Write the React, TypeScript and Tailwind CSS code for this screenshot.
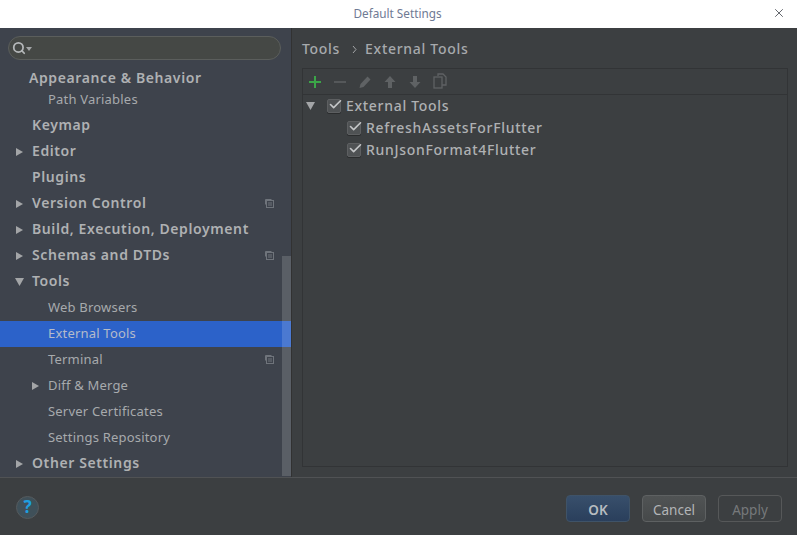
import { Check, Search, X } from 'lucide-react';

type Row = {
  label: string;
  arrow?: 'right' | 'down';
  child?: boolean;
  copy?: boolean;
  selected?: boolean;
};

const rows: Row[] = [
  { label: 'Keymap' },
  { label: 'Editor', arrow: 'right' },
  { label: 'Plugins' },
  { label: 'Version Control', arrow: 'right', copy: true },
  { label: 'Build, Execution, Deployment', arrow: 'right' },
  { label: 'Schemas and DTDs', arrow: 'right', copy: true },
  { label: 'Tools', arrow: 'down' },
  { label: 'Web Browsers', child: true },
  { label: 'External Tools', child: true, selected: true },
  { label: 'Terminal', child: true, copy: true },
  { label: 'Diff & Merge', child: true, arrow: 'right' },
  { label: 'Server Certificates', child: true },
  { label: 'Settings Repository', child: true },
  { label: 'Other Settings', arrow: 'right' },
];

function Arrow({ dir }: { dir: 'right' | 'down' }) {
  return (
    <svg width="9" height="10" viewBox="0 0 9 10" className="shrink-0">
      {dir === 'right' ? <path d="M1 1l7 4-7 4z" fill="#a3a5a7" /> : <path d="M0 1h9L4.500 9z" fill="#a3a5a7" />}
    </svg>
  );
}

function CopyMark() {
  return (
    <svg width="10" height="10" viewBox="0 0 10 10" fill="none" stroke="#6f747b" className="-mt-[2px] shrink-0">
      <path d="M7.500 1.500h-6v5" />
      <rect x="2.500" y="2.500" width="7" height="7" fill="#3e434c" />
      <path d="M4 5h4M4 7h4" />
    </svg>
  );
}

function Checked({ className }: { className?: string }) {
  return (
    <span className={`relative h-[14px] w-[14px] shrink-0 rounded-[2px] border border-[#5d5f61] bg-[#4f5254] shadow-[0_1px_0_#2b2d2e] ${className ?? ''}`}>
      <Check size={15} strokeWidth={2.6} className="absolute -top-[3px] left-0 text-[#c4c6c8]" />
    </span>
  );
}

function TreeRow({ row }: { row: Row }) {
  const weight = row.child ? 'text-[13px] font-normal tracking-[0.2px] text-[#a7aaad]' : 'pb-[4px] text-[14px] font-semibold tracking-[0.6px] text-[#afb1b3]';
  return (
    <div className={`flex h-[26px] items-center pr-[17px] ${row.selected ? 'bg-[#2c62c9]' : ''}`}>
      <div className={`flex items-center ${row.child ? 'w-[48px] pl-[31px]' : 'w-[32px] pl-[15px]'}`}>
        {row.arrow && <Arrow dir={row.arrow} />}
      </div>
      <span className={`flex-1 ${weight} ${row.selected ? 'text-[#b4bbc9]' : ''}`}>{row.label}</span>
      {row.copy && <CopyMark />}
    </div>
  );
}

function Sidebar() {
  return (
    <aside className="relative flex w-[291px] shrink-0 flex-col bg-[#3e434c]">
      <div className="ml-2 mr-[10px] mt-2 flex h-6 items-center rounded-full border border-[#5b5e5c] bg-[#454845] pl-[3px]">
        <Search size={14} strokeWidth={3} className="text-[#b5b8ba]" />
        <svg width="6" height="4" viewBox="0 0 6 4" className="mt-0.5">
          <path d="M0 0h6L3 4z" fill="#a3a5a7" />
        </svg>
      </div>
      <div className="mt-[5px] h-[26px] pl-[29px] text-[14px] font-semibold leading-[26px] tracking-[0.6px] text-[#afb1b3]">Appearance &amp; Behavior</div>
      <div className="h-[22px] pl-[48px] text-[13px] leading-[16px] tracking-[0.2px] text-[#a7aaad]">Path Variables</div>
      {rows.map((row) => (
        <TreeRow key={row.label} row={row} />
      ))}
      <div className="absolute bottom-[1px] right-0 top-[228px] w-[9px] bg-[#ffffff]/15" />
    </aside>
  );
}

function ToolTree() {
  return (
    <div className="flex flex-col text-[14px] tracking-[0.7px] text-[#afb1b3]">
      <div className="flex h-[22px] items-center pb-[1px] pl-[3px]">
        <Arrow dir="down" />
        <Checked className="ml-[12px]" />
        <span className="ml-[5px] pb-[1px] font-medium">External Tools</span>
      </div>
      {['RefreshAssetsForFlutter', 'RunJsonFormat4Flutter'].map((name) => (
        <div key={name} className="flex h-[22px] items-center pl-[44px]">
          <Checked />
          <span className="ml-[5px] pb-[1px] font-medium">{name}</span>
        </div>
      ))}
    </div>
  );
}

function Toolbar() {
  const off = '#5f6264';
  return (
    <div className="flex h-[26px] shrink-0 items-center gap-[9px] border-b border-[#323436] pl-[4px]">
      <svg width="16" height="16" viewBox="0 0 16 16" fill="#3ba548">
        <path d="M7 2h2v5h5v2H9v5H7V9H2V7h5z" />
      </svg>
      <svg width="16" height="16" viewBox="0 0 16 16" fill="#55585a">
        <path d="M2 7h12v2H2z" />
      </svg>
      <svg width="16" height="16" viewBox="0 0 16 16" fill={off}>
        <path d="M10.500 2.500l3 3-7 7.500-4 1 1-4z" />
      </svg>
      <svg width="16" height="16" viewBox="0 0 16 16" fill={off}>
        <path d="M8 2l5.500 6H10v6H6V8H2.500z" />
      </svg>
      <svg width="16" height="16" viewBox="0 0 16 16" fill={off}>
        <path d="M8 14l5.500-6H10V2H6v6H2.500z" />
      </svg>
      <svg width="16" height="16" viewBox="0 0 16 16" fill="none" stroke={off} strokeWidth="1.300" className="-mt-[1px]">
        <path d="M6 3V1h5l3 3v8h-4" />
        <rect x="2" y="4" width="8" height="11" />
      </svg>
    </div>
  );
}

function Content() {
  return (
    <main className="flex flex-1 flex-col border-l border-[#323232] pb-[10px] pl-[10px] pr-[9px]">
      <div className="flex h-[40px] items-center text-[14px] font-medium tracking-[0.7px] text-[#a7aaad]">
        <span>Tools</span>
        <svg width="5" height="9" viewBox="0 0 5 9" fill="none" stroke="#a3a5a7" className="ml-[12px] mr-[8px] mt-[2px]">
          <path d="M1 1l3 3.500-3 3.500" />
        </svg>
        <span>External Tools</span>
      </div>
      <div className="flex flex-1 flex-col border border-[#323436]">
        <Toolbar />
        <ToolTree />
      </div>
    </main>
  );
}

function Footer() {
  const base = 'flex h-[27px] w-16 items-center justify-center rounded-[4px] border pt-[4px] text-[13.5px]';
  return (
    <footer className="flex h-[58px] shrink-0 items-center border-t border-[#505254] bg-[#3c3f41] pl-4 pr-[15px] pt-[3px]">
      <div className="mb-[2px] flex h-[23px] w-[23px] items-center justify-center rounded-full border border-[#555a5d] bg-[#3f5059] text-[17px] font-bold text-[#1e9fe0]">?</div>
      <div className="ml-auto flex gap-3">
        <button className={`${base} border-[#3f5368] bg-gradient-to-b from-[#384f6b] to-[#2a3f5c] font-semibold text-[#b7bcc0]`}>OK</button>
        <button className={`${base} border-[#5e6162] bg-gradient-to-b from-[#505354] to-[#46494a] text-[#b3b5b7]`}>Cancel</button>
        <button className={`${base} border-[#565859] text-[#76797b]`}>Apply</button>
      </div>
    </footer>
  );
}

export default function App() {
  return (
    <div className="flex h-[535px] w-[797px] flex-col overflow-hidden bg-[#3c3f41] font-['Noto_Sans',sans-serif]">
      <header className="relative flex h-[28px] shrink-0 items-center justify-center bg-white pr-[2px] text-[11.75px] text-[#6f7a94]">
        Default Settings
        <X size={14} strokeWidth={1.3} className="absolute right-[11px] top-[6px] text-[#33373f]" />
      </header>
      <div className="flex min-h-0 flex-1">
        <Sidebar />
        <Content />
      </div>
      <Footer />
    </div>
  );
}
